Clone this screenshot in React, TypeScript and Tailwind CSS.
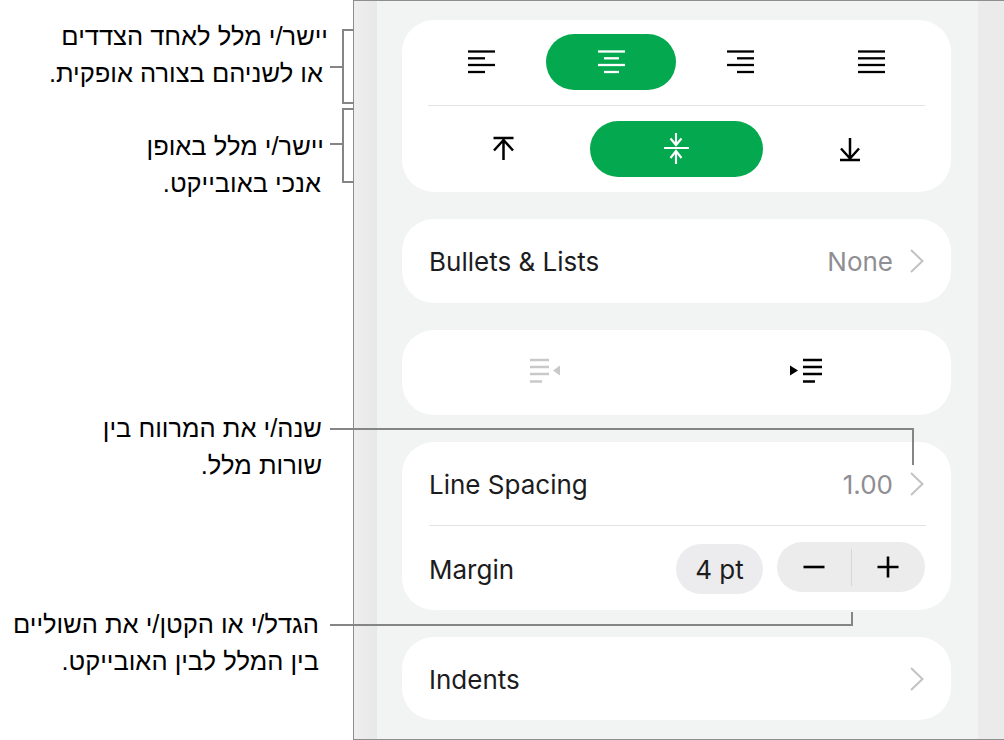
import type { ReactNode } from "react";

const uiFont = { fontFamily: "Inter, 'Liberation Sans', sans-serif" };

function Card({ children, className = "" }: { children: ReactNode; className?: string }) {
  return <div className={`bg-white rounded-[32px] ${className}`}>{children}</div>;
}

function Chevron() {
  return (
    <svg width="14" height="24" viewBox="0 0 14 24" fill="none" stroke="#c2c2c4" strokeWidth="2">
      <path d="M1 1l11.5 11L1 23" />
    </svg>
  );
}

function AlignIcon({ rows, color }: { rows: [number, number][]; color: string }) {
  const ys = [1.5, 8.3, 15, 22];
  return (
    <svg width="28" height="24" viewBox="0 0 28 24" stroke={color} strokeWidth="2.3">
      {rows.map((r, i) => (
        <path key={i} d={`M${r[0]} ${ys[i]}H${r[1]}`} />
      ))}
    </svg>
  );
}

function IndentIcon({ out }: { out: boolean }) {
  const color = out ? "#c9c9c9" : "#000000";
  const x = out ? 0 : 13;
  return (
    <svg width="32" height="26" viewBox="0 0 32 26" stroke={color} strokeWidth="2.3" className="mb-[3px]">
      <path d={`M${x} 2H${x + 19}M${x} 9H${x + 19}M${x} 16H${x + 19}M${x} 23.5H${x + 12}`} />
      {out ? (
        <path d="M30 7.5v10l-7-5z" fill={color} stroke="none" />
      ) : (
        <path d="M0 7.5v10l8-5z" fill={color} stroke="none" />
      )}
    </svg>
  );
}

function Callout({ className, children }: { className: string; children: ReactNode }) {
  return (
    <p dir="rtl" className={`text-[25.5px] leading-[36.5px] text-black text-right ${className}`}>
      {children}
    </p>
  );
}

function Line({ className }: { className: string }) {
  return <div className={`absolute bg-[#858585] ${className}`} />;
}

export default function App() {
  return (
    <div className="relative flex w-[1004px] h-[740px] bg-white overflow-hidden" style={{ fontFamily: "'Liberation Sans', sans-serif" }}>
      {/* callout texts */}
      <div className="w-[353px] shrink-0 flex flex-col">
        <Callout className="mt-[18px] pr-[30px]">
          <span className="block -mr-[5px]">יישר/י מלל לאחד הצדדים</span>
          או לשניהם בצורה אופקית.
        </Callout>
        <Callout className="mt-[37px] pr-[32px]">
          <span className="block -mr-[3px]">יישר/י מלל באופן</span>
          אנכי באובייקט.
        </Callout>
        <Callout className="mt-[209px] pr-[31px]">
          שנה/י את המרווח בין
          <br />
          שורות מלל.
        </Callout>
        <Callout className="mt-[123px] pr-[34px]">
          הגדל/י או הקטן/י את השוליים
          <br />
          בין המלל לבין האובייקט.
        </Callout>
      </div>

      {/* panel */}
      <div className="flex-1 flex border-l border-y border-[#8e8e8e] bg-[#ebebeb]" style={uiFont}>
        <div className="w-[23px] shrink-0 bg-gradient-to-r from-[#eeeeee] to-[#e8e8e8]" />
        <div className="w-[601px] shrink-0 bg-[#f2f3f3] pl-[25px] pt-[19px] flex flex-col gap-[27px]">
          <Card className="w-[549px] h-[172px] flex flex-col">
            <div className="grid grid-cols-4 w-[520px] ml-[14px] mt-[14px] h-[56px]">
              <div className="flex items-center justify-center">
                <AlignIcon color="#000" rows={[[1, 28], [1, 18], [1, 28], [1, 18]]} />
              </div>
              <div className="flex items-center justify-center rounded-[28px] bg-[#04a94f]">
                <AlignIcon color="#fff" rows={[[1, 28], [7, 22], [1, 28], [7, 22]]} />
              </div>
              <div className="flex items-center justify-center">
                <AlignIcon color="#000" rows={[[0, 27], [10, 27], [0, 27], [10, 27]]} />
              </div>
              <div className="flex items-center justify-center">
                <AlignIcon color="#000" rows={[[1, 28], [1, 28], [1, 28], [1, 28]]} />
              </div>
            </div>
            <div className="mx-[26px] mt-[15px] h-[1px] bg-[#e3e3e3]" />
            <div className="grid grid-cols-3 w-[519px] ml-[15px] mt-[15px] h-[56px]">
              <div className="flex items-center justify-center">
                <svg width="28" height="32" viewBox="0 0 28 32" fill="none" stroke="#000" strokeWidth="2.5">
                  <path d="M3.5 5H23.5M13.5 6V27M4 17.5L13.5 7L23 17.5" />
                </svg>
              </div>
              <div className="flex items-center justify-center rounded-[28px] bg-[#04a94f]">
                <svg width="28" height="32" viewBox="0 0 28 32" fill="none" stroke="#fff" strokeWidth="2.1">
                  <path d="M1 15H26M13 0V12M7.5 5.5L13 12L18.5 5.5M13 18V31M7.5 25L13 18L18.5 25" />
                </svg>
              </div>
              <div className="flex items-center justify-center">
                <svg width="28" height="32" viewBox="0 0 28 32" fill="none" stroke="#000" strokeWidth="2.5">
                  <path d="M4 27H24M14 5V26M5 15.5L14 25.5L23 15.5" />
                </svg>
              </div>
            </div>
          </Card>

          <Card className="w-[549px] h-[84px] flex items-center pl-[27px] pr-[27px]">
            <span className="text-[26px] text-[#1c1c1e]">Bullets &amp; Lists</span>
            <span className="ml-auto mr-[17px] text-[26px] text-[#8e8e93]">None</span>
            <Chevron />
          </Card>

          <Card className="w-[549px] h-[85px] grid grid-cols-2 pl-[14px] pr-[15px]">
            <div className="flex items-center justify-center">
              <IndentIcon out />
            </div>
            <div className="flex items-center justify-center">
              <IndentIcon out={false} />
            </div>
          </Card>

          <Card className="w-[549px] h-[168px] flex flex-col">
            <div className="h-[83px] flex items-center pl-[27px] pr-[27px]">
              <span className="text-[26px] text-[#1c1c1e] pt-[1px]">Line Spacing</span>
              <span className="ml-auto mr-[17px] text-[26px] text-[#8e8e93] pt-[1px]">1.00</span>
              <Chevron />
            </div>
            <div className="ml-[27px] mr-[25px] h-[1px] bg-[#e3e3e3]" />
            <div className="flex items-center pl-[27px] pr-[26px] h-[84px] pb-[2px]">
              <span className="text-[26px] text-[#1c1c1e] pt-[4px]">Margin</span>
              <div className="ml-auto mr-[14px] w-[87px] h-[50px] rounded-[25px] bg-[#ececee] flex items-center justify-center text-[26px] text-[#1c1c1e] mt-[4px]">
                4 pt
              </div>
              <div className="w-[148px] h-[50px] rounded-[25px] bg-[#ececec] flex items-center">
                <div className="flex-1 flex items-center justify-center">
                  <svg width="22" height="22" viewBox="0 0 22 22" stroke="#000" strokeWidth="2.6">
                    <path d="M0.5 11H21.5" />
                  </svg>
                </div>
                <div className="w-[1px] h-[37px] bg-[#d6d6d6]" />
                <div className="flex-1 flex items-center justify-center">
                  <svg width="22" height="22" viewBox="0 0 22 22" stroke="#000" strokeWidth="2.6">
                    <path d="M0.5 11H21.5M11 0.5V21.5" />
                  </svg>
                </div>
              </div>
            </div>
          </Card>

          <Card className="w-[549px] h-[83px] flex items-center pl-[27px] pr-[27px]">
            <span className="text-[26px] text-[#1c1c1e] pt-[1px]">Indents</span>
            <span className="ml-auto">
              <Chevron />
            </span>
          </Card>
        </div>
      </div>

      {/* leader lines */}
      <Line className="left-[342px] top-[29px] w-[2px] h-[75px]" />
      <Line className="left-[342px] top-[29px] w-[12px] h-[2px]" />
      <Line className="left-[342px] top-[102px] w-[12px] h-[2px]" />
      <Line className="left-[330px] top-[66px] w-[12px] h-[2px]" />
      <Line className="left-[342px] top-[108px] w-[2px] h-[75px]" />
      <Line className="left-[342px] top-[108px] w-[12px] h-[2px]" />
      <Line className="left-[342px] top-[181px] w-[12px] h-[2px]" />
      <Line className="left-[330px] top-[143px] w-[12px] h-[2px]" />
      <Line className="left-[330px] top-[428px] w-[584px] h-[2px]" />
      <Line className="left-[912px] top-[428px] w-[2px] h-[37px]" />
      <Line className="left-[330px] top-[624px] w-[523px] h-[2px]" />
      <Line className="left-[851px] top-[612px] w-[2px] h-[14px]" />
    </div>
  );
}
